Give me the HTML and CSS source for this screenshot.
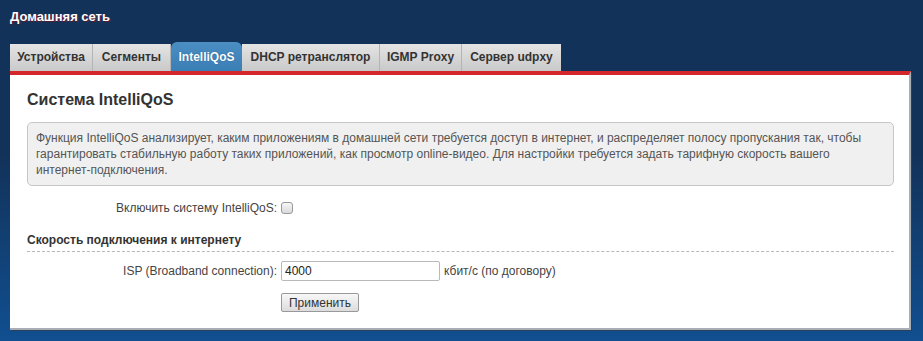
FILE: index.html
```html
<!DOCTYPE html>
<html lang="ru">
<head>
  <meta charset="UTF-8" />
  <title>Домашняя сеть</title>
  <link rel="stylesheet" href="styles.css">
</head>
<body>
  <h1 class="page-title">Домашняя сеть</h1>

  <ul class="tabs">
    <li class="tab-devices">Устройства</li>
    <li class="tab-segments">Сегменты</li>
    <li class="tab-qos active">IntelliQoS</li>
    <li class="tab-dhcp">DHCP ретранслятор</li>
    <li class="tab-igmp">IGMP Proxy</li>
    <li class="tab-udpxy">Сервер udpxy</li>
  </ul>

  <section class="panel">
    <h2>Система IntelliQoS</h2>

    <div class="info-box">
      Функция IntelliQoS анализирует, каким приложениям в домашней сети требуется доступ в интернет, и распределяет полосу пропускания так, чтобы гарантировать стабильную работу таких приложений, как просмотр online-видео. Для настройки требуется задать тарифную скорость вашего интернет-подключения.
    </div>

    <div class="row row-check">
      <label for="enable">Включить систему IntelliQoS:</label>
      <input type="checkbox" id="enable" />
    </div>

    <h3>Скорость подключения к интернету</h3>

    <div class="row">
      <label for="isp">ISP (Broadband connection):</label>
      <input type="text" id="isp" value="4000" />
      <span class="unit">кбит/с (по договору)</span>
    </div>

    <div class="row row-last">
      <label></label>
      <button type="button">Применить</button>
    </div>
  </section>
</body>
</html>
```

FILE: styles.css
```css
html {
  height: 100%;
}

body {
  font-family: 'Liberation Sans', Arial, sans-serif;
  font-size: 12px;
  color: #444;
  margin: 0;
  padding: 0 12px 0 10px;
  min-height: 100%;
  box-sizing: border-box;
  background: linear-gradient(to bottom, #123259 0%, #123259 45%, #114f90 100%);
}

.page-title {
  color: #fff;
  font-size: 13px;
  font-weight: bold;
  margin: 0;
  padding: 9px 0 0 0;
  height: 42px;
  box-sizing: border-box;
  text-shadow: 1px 1px 0 #5a1a2a;
}

.tabs {
  list-style: none;
  margin: 0;
  padding: 0;
  display: flex;
  align-items: flex-end;
  height: 29px;
}

.tabs li {
  height: 27px;
  line-height: 27px;
  box-sizing: border-box;
  text-align: center;
  font-size: 12px;
  font-weight: bold;
  color: #333;
  background: linear-gradient(to bottom, #e4e4e4, #c9c9c9);
  border-right: 1px solid #b4b4b4;
}

.tab-devices { width: 83px; }
.tab-segments { width: 78px; }
.tab-qos { width: 71px; }
.tab-dhcp { width: 138px; }
.tab-igmp { width: 82px; }
.tab-udpxy { width: 99px; }

.tabs li.active {
  height: 29px;
  line-height: 30px;
  color: #fff;
  background: linear-gradient(to bottom, #4b8ec2, #3a7eb6);
  border-radius: 6px 6px 0 0;
  border-right: none;
  text-shadow: 0 0 1px #1d4f7a;
}

.tabs li:last-child {
  border-right: none;
}

.panel {
  border-top: 4px solid #d3272c;
  background: #fff;
  padding: 16px 15px 16px 17px;
  border-right: 2px solid #a9aeb6;
  border-bottom: 2px solid #a9aeb6;
  box-shadow: 1px 1px 0 #2a3f5c;
}

h2 {
  font-size: 16px;
  line-height: 18px;
  color: #333;
  margin: 0 0 13px 0;
}

.info-box {
  background: #f0f0f0;
  border: 1px solid #c6c6c6;
  border-radius: 5px;
  padding: 7px 9px 7px 8px;
  color: #555;
  line-height: 16px;
  margin-bottom: 15px;
}

.row {
  display: flex;
  align-items: center;
  gap: 4px;
  margin-bottom: 12px;
  color: #444;
}

.row label {
  width: 250px;
  text-align: right;
  flex-shrink: 0;
}

.row-check {
  margin-bottom: 18px;
}

.row-last {
  margin-bottom: 0;
}

input[type="checkbox"] {
  width: 12px;
  height: 12px;
  margin: 0;
  appearance: none;
  border: 1px solid #999;
  border-radius: 3px;
  background: linear-gradient(to bottom, #f6f6f6, #dadada);
}

h3 {
  font-size: 12px;
  line-height: 14px;
  color: #333;
  margin: 0 0 9px 0;
  padding-bottom: 4px;
  border-bottom: 1px dashed #b8b8b8;
}

input[type="text"] {
  width: 159px;
  height: 20px;
  box-sizing: border-box;
  border: 1px solid #b9b9b9;
  border-radius: 2px;
  font-family: inherit;
  font-size: 12px;
  padding: 0 3px;
  color: #222;
}

button {
  width: 78px;
  height: 19px;
  font-family: inherit;
  font-size: 12px;
  color: #333;
  border: 1px solid #999;
  border-radius: 2px;
  background: linear-gradient(to bottom, #f7f7f7, #dcdcdc);
  padding: 0;
}
```
